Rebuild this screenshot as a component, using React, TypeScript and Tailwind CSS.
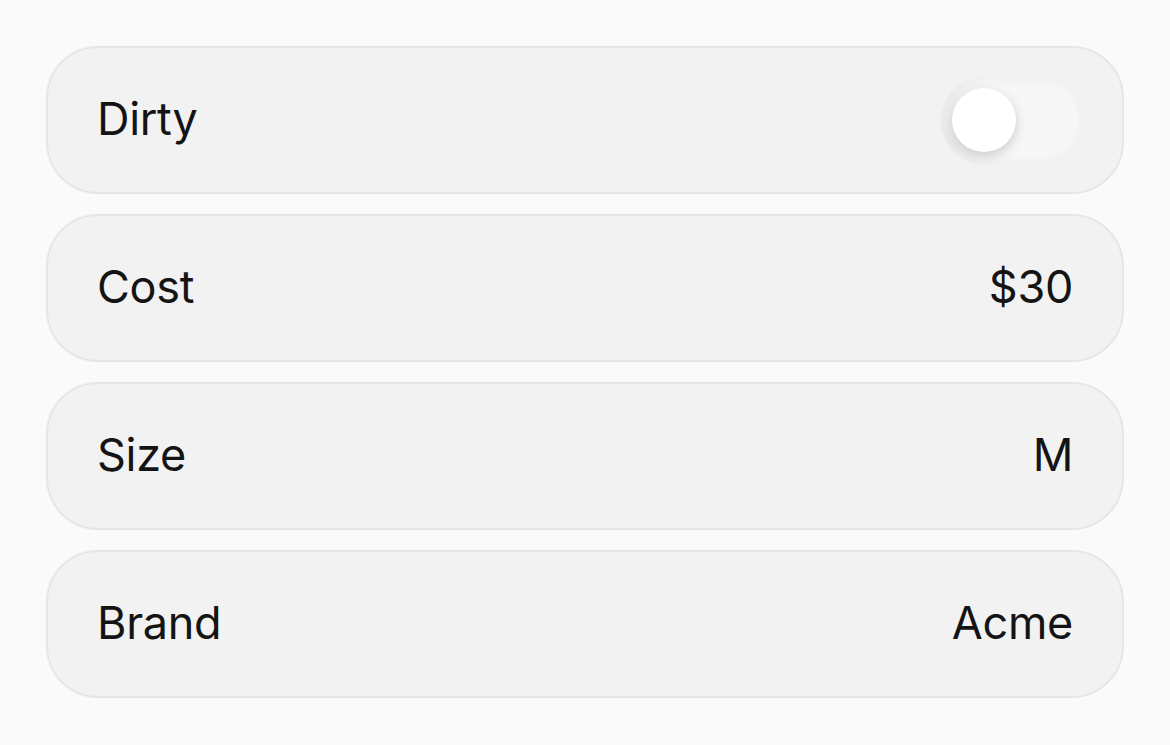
import React, { useState } from 'react';

const Row: React.FC<{ label: string; children: React.ReactNode }> = ({ label, children }) => (
  <div className="flex h-[148px] items-center justify-between rounded-[52px] border-2 border-[#e6e6e6] bg-[#f2f2f2] pl-[49px] pr-[49px]">
    <span className="mb-[4px] text-[45px] leading-none tracking-[-0.3px] text-[#141414]">{label}</span>
    {children}
  </div>
);

const Value: React.FC<{ text: string }> = ({ text }) => (
  <span className="mb-[4px] text-[45px] leading-none tracking-[-0.3px] text-[#141414]">{text}</span>
);

const Toggle: React.FC = () => {
  const [on, setOn] = useState(false);
  return (
    <button
      onClick={() => setOn(!on)}
      className="-mr-[6px] flex h-[87px] w-[138px] items-center rounded-full bg-[#f7f7f7] px-[11px] shadow-[inset_8px_0_14px_rgba(0,0,0,0.06)]"
    >
      <span
        className={
          on
            ? 'ml-auto h-[64px] w-[64px] rounded-full bg-white shadow-[0_4px_12px_rgba(0,0,0,0.18)]'
            : 'h-[64px] w-[64px] rounded-full bg-white shadow-[0_4px_12px_rgba(0,0,0,0.18)]'
        }
      />
    </button>
  );
};

export default function App() {
  return (
    <div className="min-h-screen bg-[#fafafa] px-[46px] py-[46px] font-['Inter',sans-serif]">
      <div className="flex flex-col gap-5">
        <Row label="Dirty">
          <Toggle />
        </Row>
        <Row label="Cost">
          <Value text="$30" />
        </Row>
        <Row label="Size">
          <Value text="M" />
        </Row>
        <Row label="Brand">
          <Value text="Acme" />
        </Row>
      </div>
    </div>
  );
}
